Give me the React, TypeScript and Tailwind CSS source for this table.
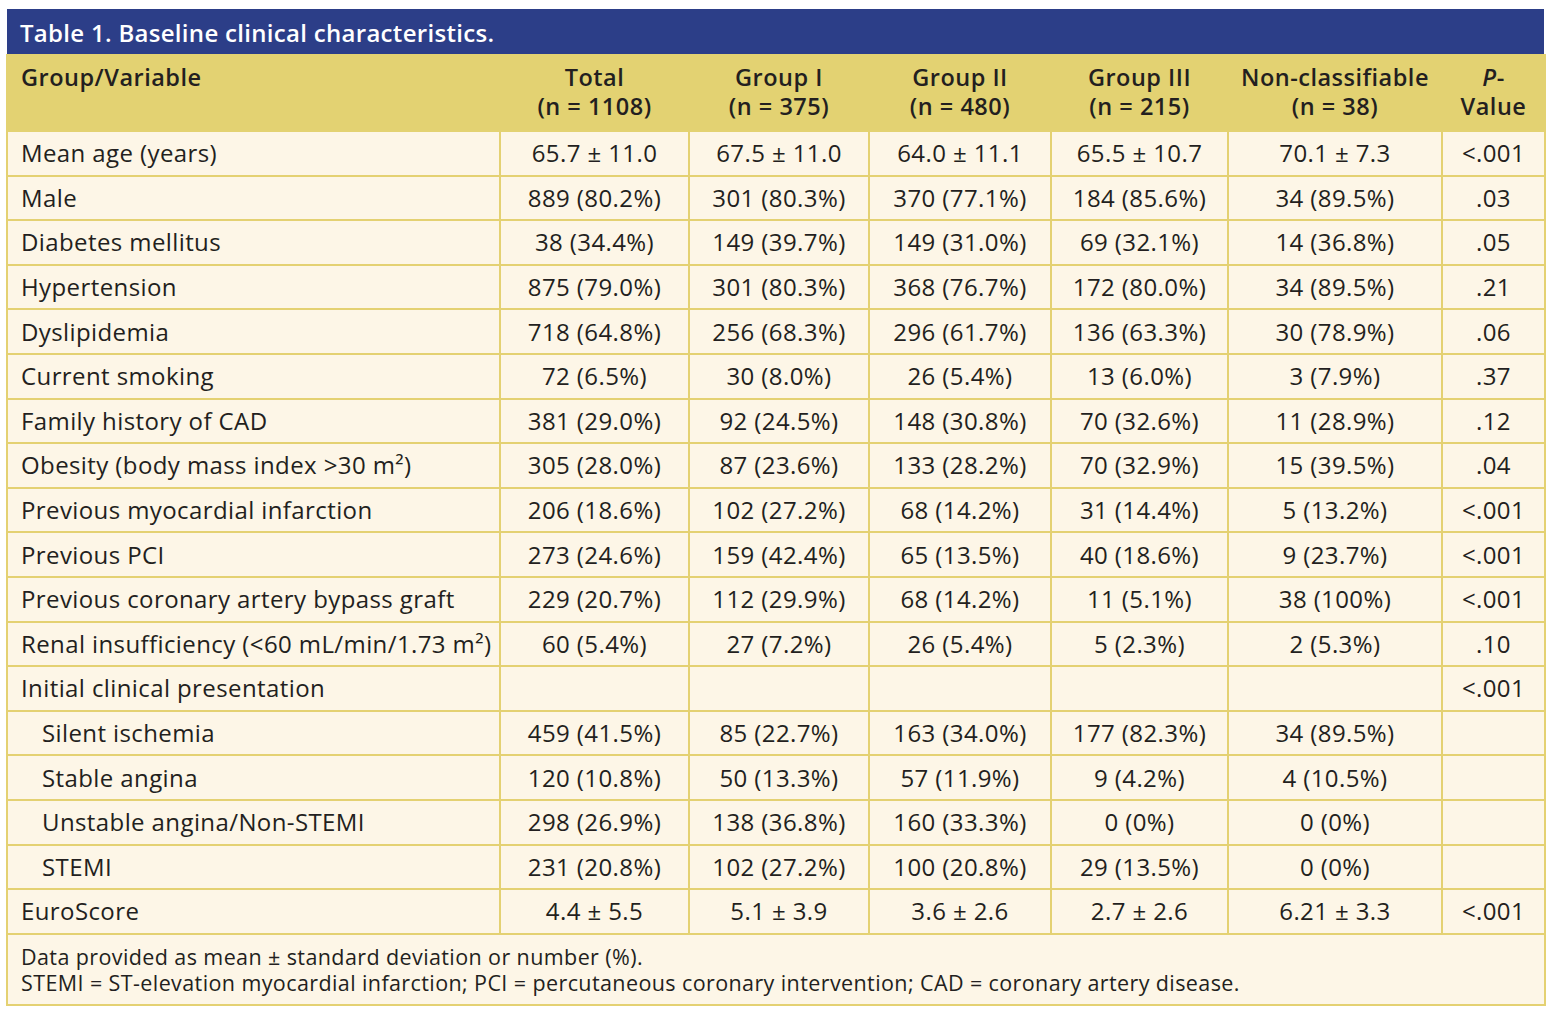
import React from "react";

// Baseline clinical characteristics table, journal style.

type Row = {
  label: React.ReactNode;
  values: string[];
  p: string;
  indent?: boolean;
};

const ROWS: Row[] = [
  { label: "Mean age (years)", values: ["65.7 ± 11.0", "67.5 ± 11.0", "64.0 ± 11.1", "65.5 ± 10.7", "70.1 ± 7.3"], p: "<.001" },
  { label: "Male", values: ["889 (80.2%)", "301 (80.3%)", "370 (77.1%)", "184 (85.6%)", "34 (89.5%)"], p: ".03" },
  { label: "Diabetes mellitus", values: ["38 (34.4%)", "149 (39.7%)", "149 (31.0%)", "69 (32.1%)", "14 (36.8%)"], p: ".05" },
  { label: "Hypertension", values: ["875 (79.0%)", "301 (80.3%)", "368 (76.7%)", "172 (80.0%)", "34 (89.5%)"], p: ".21" },
  { label: "Dyslipidemia", values: ["718 (64.8%)", "256 (68.3%)", "296 (61.7%)", "136 (63.3%)", "30 (78.9%)"], p: ".06" },
  { label: "Current smoking", values: ["72 (6.5%)", "30 (8.0%)", "26 (5.4%)", "13 (6.0%)", "3 (7.9%)"], p: ".37" },
  { label: "Family history of CAD", values: ["381 (29.0%)", "92 (24.5%)", "148 (30.8%)", "70 (32.6%)", "11 (28.9%)"], p: ".12" },
  { label: "Obesity (body mass index >30 m²)", values: ["305 (28.0%)", "87 (23.6%)", "133 (28.2%)", "70 (32.9%)", "15 (39.5%)"], p: ".04" },
  { label: "Previous myocardial infarction", values: ["206 (18.6%)", "102 (27.2%)", "68 (14.2%)", "31 (14.4%)", "5 (13.2%)"], p: "<.001" },
  { label: "Previous PCI", values: ["273 (24.6%)", "159 (42.4%)", "65 (13.5%)", "40 (18.6%)", "9 (23.7%)"], p: "<.001" },
  { label: "Previous coronary artery bypass graft", values: ["229 (20.7%)", "112 (29.9%)", "68 (14.2%)", "11 (5.1%)", "38 (100%)"], p: "<.001" },
  { label: "Renal insufficiency (<60 mL/min/1.73 m²)", values: ["60 (5.4%)", "27 (7.2%)", "26 (5.4%)", "5 (2.3%)", "2 (5.3%)"], p: ".10" },
  { label: "Initial clinical presentation", values: ["", "", "", "", ""], p: "<.001" },
  { label: "Silent ischemia", indent: true, values: ["459 (41.5%)", "85 (22.7%)", "163 (34.0%)", "177 (82.3%)", "34 (89.5%)"], p: "" },
  { label: "Stable angina", indent: true, values: ["120 (10.8%)", "50 (13.3%)", "57 (11.9%)", "9 (4.2%)", "4 (10.5%)"], p: "" },
  { label: "Unstable angina/Non-STEMI", indent: true, values: ["298 (26.9%)", "138 (36.8%)", "160 (33.3%)", "0 (0%)", "0 (0%)"], p: "" },
  { label: "STEMI", indent: true, values: ["231 (20.8%)", "102 (27.2%)", "100 (20.8%)", "29 (13.5%)", "0 (0%)"], p: "" },
  { label: "EuroScore", values: ["4.4 ± 5.5", "5.1 ± 3.9", "3.6 ± 2.6", "2.7 ± 2.6", "6.21 ± 3.3"], p: "<.001" },
];

const HEADS: Array<[string, string]> = [
  ["Total", "(n = 1108)"],
  ["Group I", "(n = 375)"],
  ["Group II", "(n = 480)"],
  ["Group III", "(n = 215)"],
  ["Non-classifiable", "(n = 38)"],
];

export default function App() {
  return (
    <div className="min-h-screen bg-white font-['Open_Sans',sans-serif] text-[#231f20]">
      <div className="ml-[6px] pt-[9px] w-[1538px]">
        <div className="ml-px h-[45px] bg-[#2c3e88] pl-[13px] text-[24px] font-semibold leading-[48px] tracking-[0.3px] text-white">
          Table 1. Baseline clinical characteristics.
        </div>
        <table className="w-full table-fixed border-collapse bg-[#fdf6e7] text-[24px] tracking-[0.4px]">
          <colgroup>
            <col className="w-[493px]" />
            <col className="w-[189px]" />
            <col className="w-[180px]" />
            <col className="w-[182px]" />
            <col className="w-[177px]" />
            <col className="w-[214px]" />
            <col className="w-[103px]" />
          </colgroup>
          <thead>
            <tr className="h-[76px] bg-[#e3d272] text-[23.5px] leading-[29px] tracking-[0.5px]">
              <th className="border-2 border-[#e3d272] pl-[13px] pt-[7px] text-left align-top font-semibold">
                Group/Variable
              </th>
              {HEADS.map(([a, b]) => (
                <th key={a} className="border-2 border-[#e3d272] pt-[7px] text-center align-top font-semibold">
                  <div>{a}</div>
                  <div>{b}</div>
                </th>
              ))}
              <th className="border-2 border-[#e3d272] pt-[7px] text-center align-top font-semibold">
                <div>
                  <i>P</i>-
                </div>
                <div>Value</div>
              </th>
            </tr>
          </thead>
          <tbody>
            {ROWS.map((r, i) => (
              <tr key={i} className="h-[44.6px]">
                <td
                  className={
                    r.indent
                      ? "border-2 border-[#e4d172] pl-[34px] whitespace-nowrap"
                      : "border-2 border-[#e4d172] pl-[13px] whitespace-nowrap"
                  }
                >
                  {r.label}
                </td>
                {r.values.map((v, j) => (
                  <td key={j} className="border-2 border-[#e4d172] text-center whitespace-nowrap">
                    {v}
                  </td>
                ))}
                <td className="border-2 border-[#e4d172] text-center">{r.p}</td>
              </tr>
            ))}
            <tr>
              <td
                colSpan={7}
                className="border-2 border-[#e4d172] pl-[13px] pt-[9px] pb-[8px] text-[21.5px] leading-[26px] tracking-[0.4px]"
              >
                <div>Data provided as mean ± standard deviation or number (%).</div>
                <div>
                  STEMI = ST-elevation myocardial infarction; PCI = percutaneous coronary intervention; CAD = coronary
                  artery disease.
                </div>
              </td>
            </tr>
          </tbody>
        </table>
      </div>
    </div>
  );
}
